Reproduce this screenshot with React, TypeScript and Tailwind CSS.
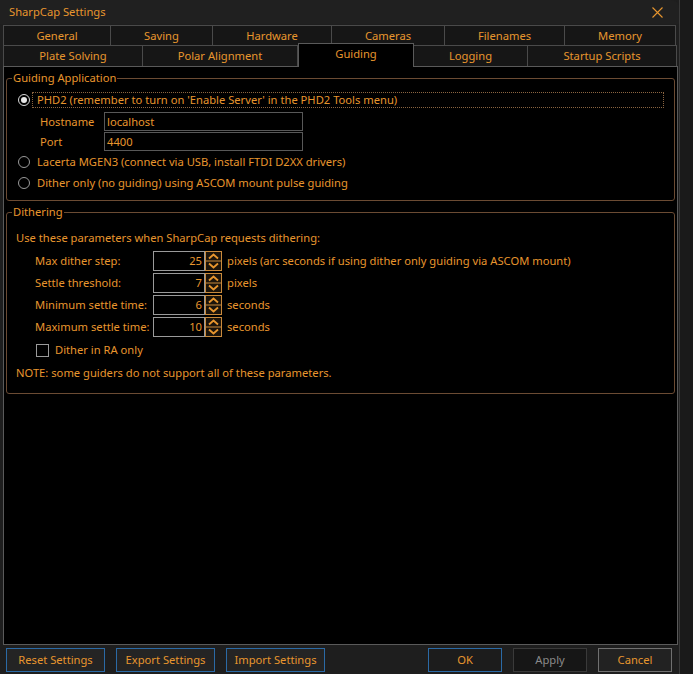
import React from 'react';

const orange = 'text-[#e8962e]';

const rowOneTabs = [
  { label: 'General', w: 'w-[108px]' },
  { label: 'Saving', w: 'w-[102px]' },
  { label: 'Hardware', w: 'w-[119px]' },
  { label: 'Cameras', w: 'w-[113px]' },
  { label: 'Filenames', w: 'w-[120px]' },
  { label: 'Memory', w: 'w-[111px]' },
];

const rowTwoTabs = [
  { label: 'Plate Solving', w: 'w-[140px]' },
  { label: 'Polar Alignment', w: 'w-[155px]' },
  { label: 'Guiding', w: 'w-[116px]', active: true },
  { label: 'Logging', w: 'w-[114px]' },
  { label: 'Startup Scripts', w: 'w-[149px]' },
];

const ditherRows = [
  { label: 'Max dither step:', value: '25', unit: 'pixels (arc seconds if using dither only guiding via ASCOM mount)' },
  { label: 'Settle threshold:', value: '7', unit: 'pixels' },
  { label: 'Minimum settle time:', value: '6', unit: 'seconds' },
  { label: 'Maximum settle time:', value: '10', unit: 'seconds' },
];

const Radio = ({ checked }: { checked?: boolean }) => (
  <span
    className={`w-[12px] h-[12px] rounded-full border flex items-center justify-center shrink-0 bg-black ${
      checked ? 'border-[#d8d8d8]' : 'border-[#9a9a9a]'
    }`}
  >
    {checked && <span className="w-[6px] h-[6px] rounded-full bg-[#e8e8e8]" />}
  </span>
);

const Spinner = () => (
  <svg width="17" height="20" viewBox="0 0 17 20" className="shrink-0">
    <rect x="0.5" y="0.5" width="16" height="19" fill="#1c140b" stroke="#c98a3c" />
    <line x1="0" y1="10" x2="17" y2="10" stroke="#c98a3c" />
    <path d="M4 7.5 L8.5 3.5 L13 7.5" stroke="#e8962e" strokeWidth="1.8" fill="none" />
    <path d="M4 12.5 L8.5 16.5 L13 12.5" stroke="#e8962e" strokeWidth="1.8" fill="none" />
  </svg>
);

const App = () => {
  return (
    <div className={`w-[693px] h-[674px] bg-[#1a1a1a] flex text-[11.2px] leading-[16px] whitespace-nowrap ${orange}`} style={{ fontFamily: '"Noto Sans", sans-serif' }}>
      <div className="w-[680px] h-full flex flex-col bg-[#1e1e1e] border-r border-[#3a3a3a]">
        {/* Title bar */}
        <div className="h-[24px] bg-[#202020] rounded-tr-[8px] flex items-center justify-between pl-[9px] pr-[16px] shrink-0">
          <span>SharpCap Settings</span>
          <svg width="11" height="11" viewBox="0 0 11 11">
            <path d="M0.5 0.5 L10.5 10.5 M10.5 0.5 L0.5 10.5" stroke="#e8962e" strokeWidth="1.1" />
          </svg>
        </div>

        {/* Tabs */}
        <div className="pt-[1px] pl-[3px] shrink-0">
          <div className="flex h-[20px]">
            {rowOneTabs.map((t, i) => (
              <div
                key={t.label}
                className={`${t.w} h-full bg-[#161616] border-t border-r border-[#4a4a4a] ${i === 0 ? 'border-l' : ''} flex items-center justify-center`}
              >
                {t.label}
              </div>
            ))}
          </div>
          <div className="flex h-[21px] items-end">
            {rowTwoTabs.map((t, i) =>
              t.active ? (
                <div
                  key={t.label}
                  className={`${t.w} h-[24px] -mb-px relative z-10 bg-black border-t border-r border-l border-[#5a5a5a] flex items-start justify-center pt-[2px]`}
                >
                  {t.label}
                </div>
              ) : (
                <div
                  key={t.label}
                  className={`${t.w} h-full bg-[#161616] border-t border-r border-[#4a4a4a] ${i === 0 ? 'border-l' : ''} flex items-center justify-center`}
                >
                  {t.label}
                </div>
              )
            )}
          </div>
        </div>

        {/* Tab panel */}
        <div className="ml-[3px] w-[675px] flex-1 bg-black border border-[#5a5a5a] px-[2px] flex flex-col">
          {/* Guiding Application */}
          <fieldset className="mt-[3px] border border-[#6b4b33] rounded-[3px] px-0 pt-0 pb-[7px]">
            <legend className="ml-[5px] px-[1px] leading-[16px]">Guiding Application</legend>
            <div className="mt-[3px] h-[21px] flex items-center ml-[11px] mr-[10px]">
              <Radio checked />
              <span className="ml-[2px] flex-1 h-[16px] border border-dotted border-[#8a6440] pl-[4px] flex items-center">
                PHD2 (remember to turn on 'Enable Server' in the PHD2 Tools menu)
              </span>
            </div>
            <div className="mt-[2px] h-[19px] flex items-center ml-[33px]">
              <span className="w-[64px]">Hostname</span>
              <div className="w-[199px] h-full border border-[#585858] bg-black pl-[2px] flex items-center">localhost</div>
            </div>
            <div className="mt-[1px] h-[19px] flex items-center ml-[33px]">
              <span className="w-[64px]">Port</span>
              <div className="w-[199px] h-full border border-[#585858] bg-black pl-[2px] flex items-center">4400</div>
            </div>
            <div className="h-[21px] flex items-center ml-[11px] gap-[7px]">
              <Radio />
              <span>Lacerta MGEN3 (connect via USB, install FTDI D2XX drivers)</span>
            </div>
            <div className="h-[21px] flex items-center ml-[11px] gap-[7px]">
              <Radio />
              <span>Dither only (no guiding) using ASCOM mount pulse guiding</span>
            </div>
          </fieldset>

          {/* Dithering */}
          <fieldset className="mt-[3px] border border-[#6b4b33] rounded-[3px] px-0 pt-0 pb-[12px]">
            <legend className="ml-[5px] px-[1px] leading-[16px]">Dithering</legend>
            <div className="mt-[10px] h-[16px] ml-[9px]">Use these parameters when SharpCap requests dithering:</div>
            <div className="mt-[4px] flex flex-col">
              {ditherRows.map((r) => (
                <div key={r.label} className="h-[22px] flex items-center ml-[28px]">
                  <span className="w-[118px]">{r.label}</span>
                  <div className="w-[52px] h-[20px] border border-[#9a9a9a] bg-black flex items-center justify-end pr-[2px]">
                    {r.value}
                  </div>
                  <Spinner />
                  <span className="ml-[5px]">{r.unit}</span>
                </div>
              ))}
            </div>
            <div className="mt-[2px] h-[20px] flex items-center ml-[29px] gap-[6px]">
              <span className="w-[13px] h-[13px] border border-[#9a9a9a] bg-black" />
              <span>Dither in RA only</span>
            </div>
            <div className="mt-[5px] h-[16px] ml-[9px]">NOTE: some guiders do not support all of these parameters.</div>
          </fieldset>
        </div>

        {/* Bottom buttons */}
        <div className="h-[29px] pt-[3px] pl-[6px] pr-[7px] flex items-start shrink-0">
          <div className="flex gap-[11px]">
            {['Reset Settings', 'Export Settings', 'Import Settings'].map((b) => (
              <button key={b} className="w-[99px] h-[24px] bg-[#242424] border border-[#2b6aa6] flex items-center justify-center">
                {b}
              </button>
            ))}
          </div>
          <div className="ml-auto flex gap-[11px]">
            <button className="w-[74px] h-[24px] bg-[#1c1c1c] border border-[#2b6aa6] flex items-center justify-center">OK</button>
            <button className="w-[74px] h-[24px] bg-[#161616] border border-[#3a3a3a] text-[#8a8a8a] flex items-center justify-center">Apply</button>
            <button className="w-[74px] h-[24px] bg-[#222222] border border-[#707070] flex items-center justify-center">Cancel</button>
          </div>
        </div>
      </div>
    </div>
  );
};

export default App;
